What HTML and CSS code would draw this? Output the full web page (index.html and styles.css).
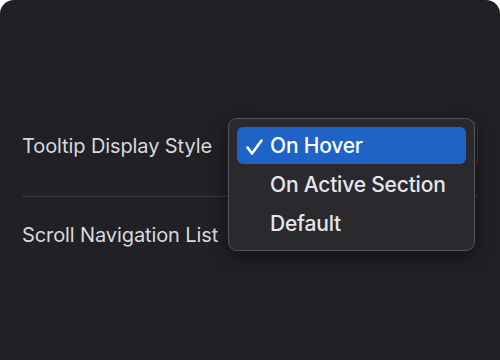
FILE: index.html
```html
<!DOCTYPE html>
<html lang="en">
<head>
    <meta charset="UTF-8">
    <meta name="viewport" content="width=device-width, initial-scale=1.0">
    <title>Sidebar Settings</title>
    <link rel="stylesheet" href="styles.css">
</head>
<body>

    <!-- Settings panel -->
    <div class="panel">
        <div class="settings">
            <div class="row row-first">
                <span class="label">Tooltip Display Style</span>
                <div class="select-box"></div>
            </div>
            <div class="row row-second">
                <span class="label">Scroll Navigation List</span>
            </div>
        </div>

        <!-- Open dropdown menu -->
        <ul class="menu">
            <li class="menu-item selected">
                <svg class="check" width="17" height="16" viewBox="0 0 17 16">
                    <path d="M1.5 8.5 L6 14.5 L15.5 1.5" fill="none" stroke="#fff" stroke-width="2.6" stroke-linecap="round" stroke-linejoin="round"/>
                </svg>
                On Hover
            </li>
            <li class="menu-item">On Active Section</li>
            <li class="menu-item">Default</li>
        </ul>
    </div>

</body>
</html>
```

FILE: styles.css
```css
body {
    margin: 0;
    padding: 0;
    background-color: #ffffff;
    font-family: Inter, "Noto Sans", sans-serif;
}

/* Panel */
.panel {
    position: relative;
    height: 360px;
    background-color: #202025;
    border-radius: 14px 14px 0 0;
    overflow: hidden;
}

.settings {
    padding: 120px 22px 0 22px;
}

.row {
    display: flex;
    align-items: center;
    justify-content: space-between;
}

.row-first {
    padding-bottom: 28px;
    border-bottom: 1px solid #3a3a3f;
}

.row-first .label {
    padding-top: 3px;
}

.row-second {
    padding-top: 26px;
}

.label {
    color: #d9d9dd;
    font-size: 20px;
    letter-spacing: -0.1px;
}

.select-box {
    width: 90px;
    height: 48px;
    border: 1px solid #3c3c42;
    border-radius: 8px;
    box-sizing: border-box;
}

/* Dropdown menu */
.menu {
    position: absolute;
    left: 228px;
    top: 118px;
    width: 247px;
    margin: 0;
    padding: 8px;
    box-sizing: border-box;
    list-style: none;
    background-color: #29292e;
    border: 1px solid #55555b;
    border-radius: 9px;
    box-shadow: 0 6px 18px rgba(0, 0, 0, 0.45);
    display: flex;
    flex-direction: column;
    gap: 2px;
}

.menu-item {
    height: 37px;
    display: flex;
    align-items: center;
    padding-left: 33px;
    border-radius: 6px;
    color: #e6e6e9;
    font-size: 21px;
    font-weight: 500;
    letter-spacing: -0.2px;
}

.menu-item.selected {
    position: relative;
    background-color: #1f63c6;
    color: #ffffff;
}

.check {
    position: absolute;
    left: 9px;
    top: 12px;
}
```
